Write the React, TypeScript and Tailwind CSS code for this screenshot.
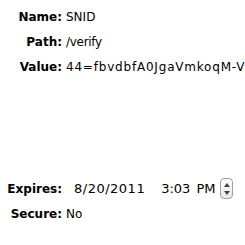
import React from "react";

const FONT = { fontFamily: '"DejaVu Sans", "Liberation Sans", sans-serif' };

function Row({ label, value, className = "" }: { label: string; value: string; className?: string }) {
  return (
    <div className={`flex items-center h-[25px] ${className}`}>
      <span className="w-[62px] shrink-0 text-right font-bold">{label}</span>
      <span className="ml-[4px] whitespace-nowrap">{value}</span>
    </div>
  );
}

export default function App() {
  return (
    <div className="w-[245px] h-[245px] bg-white text-black text-[12px] overflow-hidden pt-[4px]" style={FONT}>
      <Row label="Name:" value="SNID" />
      <Row label="Path:" value="/verify" className="[&>span:last-child]:tracking-[-0.3px]" />
      <Row label="Value:" value="44=fbvdbfA0JgaVmkoqM-V5" className="[&>span:last-child]:tracking-[0.8px]" />

      <div className="flex items-center h-[25px] mt-[97px]">
        <span className="w-[62px] shrink-0 text-right font-bold">Expires:</span>
        <span className="ml-[12px] text-[13px] tracking-[0.5px]">8/20/2011</span>
        <span className="ml-[16px] text-[13px]">3:03</span>
        <span className="ml-[6px] text-[13px]">PM</span>
        <div className="ml-[5px] w-[13px] h-[21px] rounded-[4px] border border-[#a0a0a0] bg-gradient-to-b from-white to-[#e8e8e8] flex flex-col items-center justify-center gap-[4px]">
          <svg width="6" height="4" viewBox="0 0 6 4"><path d="M3 0L6 4H0Z" fill="#444" /></svg>
          <svg width="6" height="4" viewBox="0 0 6 4"><path d="M0 0H6L3 4Z" fill="#444" /></svg>
        </div>
      </div>
      <Row label="Secure:" value="No" />
    </div>
  );
}
